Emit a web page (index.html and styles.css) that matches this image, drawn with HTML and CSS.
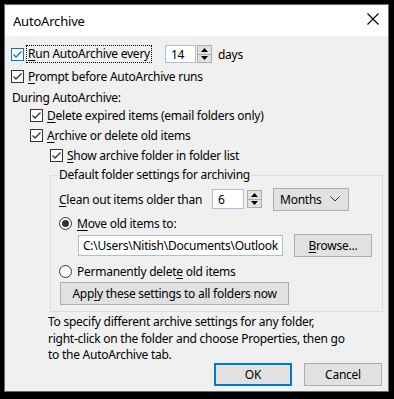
FILE: index.html
```html
<!DOCTYPE html>
<html>
<head>
<meta charset="utf-8">
<title>AutoArchive</title>
<link rel="stylesheet" href="styles.css">
</head>
<body>
<div class="dialog">
  <div class="titlebar">
    <span class="title">AutoArchive</span>
    <svg class="close" width="12" height="12" viewBox="0 0 12 12"><path d="M0.5 0.5L11.5 11.5M11.5 0.5L0.5 11.5" stroke="#000" stroke-width="1.1" fill="none"/></svg>
  </div>
  <div class="content">
    <div class="row r-run">
      <span class="chk focus"><svg width="11" height="11" viewBox="0 0 11 11"><path d="M1.5 5.5L4 8L9.5 2.5" stroke="#0078d7" stroke-width="1.3" fill="none"/></svg></span>
      <span class="lbl focusring"><u>R</u>un AutoArchive every</span>
      <span class="spin s-days">
        <span class="field f-days">14</span>
        <span class="spinbtns">
          <span class="sb"><svg width="7" height="4" viewBox="0 0 7 4"><path d="M0 4L3.5 0L7 4Z" fill="#000"/></svg></span>
          <span class="sb"><svg width="7" height="4" viewBox="0 0 7 4"><path d="M0 0L3.5 4L7 0Z" fill="#000"/></svg></span>
        </span>
      </span>
      <span class="days">days</span>
    </div>
    <div class="row r-prompt">
      <span class="chk"><svg width="11" height="11" viewBox="0 0 11 11"><path d="M1.5 5.5L4 8L9.5 2.5" stroke="#333" stroke-width="1.3" fill="none"/></svg></span>
      <span class="lbl"><u>P</u>rompt before AutoArchive runs</span>
    </div>
    <div class="row r-during">
      <span class="lbl">During AutoArchive:</span>
    </div>
    <div class="row r-delete ind1">
      <span class="chk"><svg width="11" height="11" viewBox="0 0 11 11"><path d="M1.5 5.5L4 8L9.5 2.5" stroke="#333" stroke-width="1.3" fill="none"/></svg></span>
      <span class="lbl"><u>D</u>elete expired items (email folders only)</span>
    </div>
    <div class="row r-archive ind1">
      <span class="chk"><svg width="11" height="11" viewBox="0 0 11 11"><path d="M1.5 5.5L4 8L9.5 2.5" stroke="#333" stroke-width="1.3" fill="none"/></svg></span>
      <span class="lbl"><u>A</u>rchive or delete old items</span>
    </div>
    <div class="row r-show ind2">
      <span class="chk"><svg width="11" height="11" viewBox="0 0 11 11"><path d="M1.5 5.5L4 8L9.5 2.5" stroke="#333" stroke-width="1.3" fill="none"/></svg></span>
      <span class="lbl"><u>S</u>how archive folder in folder list</span>
    </div>
    <fieldset class="group">
      <legend class="legend">Default folder settings for archiving</legend>
      <div class="row r-clean">
        <span class="lbl clean-lbl"><u>C</u>lean out items older than</span>
        <span class="spin s-age">
          <span class="field f-age">6</span>
          <span class="spinbtns">
            <span class="sb"><svg width="7" height="4" viewBox="0 0 7 4"><path d="M0 4L3.5 0L7 4Z" fill="#000"/></svg></span>
            <span class="sb"><svg width="7" height="4" viewBox="0 0 7 4"><path d="M0 0L3.5 4L7 0Z" fill="#000"/></svg></span>
          </span>
        </span>
        <span class="select">
          <span>Months</span>
          <svg width="10" height="6" viewBox="0 0 10 6"><path d="M0.5 0.5L5 5L9.5 0.5" stroke="#333" stroke-width="1" fill="none"/></svg>
        </span>
      </div>
      <div class="row r-move">
        <span class="radio on"><span class="dot"></span></span>
        <span class="lbl"><u>M</u>ove old items to:</span>
      </div>
      <div class="row r-path">
        <span class="field f-path">C:\Users\Nitish\Documents\Outlook</span>
        <span class="btn b-browse"><u>B</u>rowse...</span>
      </div>
      <div class="row r-perm">
        <span class="radio"></span>
        <span class="lbl">Permanently delet<u>e</u> old items</span>
      </div>
      <div class="row r-apply">
        <span class="btn b-apply">App<u>l</u>y these settings to all folders now</span>
      </div>
    </fieldset>
    <p class="note">To specify different archive settings for any folder,<br>right-click on the folder and choose Properties, then go<br>to the AutoArchive tab.</p>
    <div class="actions">
      <span class="btn b-ok">OK</span>
      <span class="btn b-cancel">Cancel</span>
    </div>
  </div>
</div>
</body>
</html>
```
FILE: styles.css
```css
* { box-sizing: border-box; }
html, body { margin: 0; }
body {
  background: #000;
  width: 394px;
  height: 399px;
  padding: 4px 5px 7px 4px;
  font-family: "Noto Sans", "Open Sans", sans-serif;
  font-size: 12px;
  letter-spacing: -0.25px;
  color: #000;
  overflow: hidden;
}
u { text-decoration: underline; text-underline-offset: 2px; text-decoration-thickness: 1px; }
.dialog {
  width: 385px;
  height: 388px;
  border: 1px solid #6b6b6b;
  background: #f0f0f0;
  display: flex;
  flex-direction: column;
}
.titlebar {
  height: 31px;
  flex: none;
  background: #fff;
  display: flex;
  align-items: center;
  justify-content: space-between;
  padding: 0 9px 0 8px;
}
.title { font-size: 13px; letter-spacing: -0.2px; }
.close { margin-top: -3px; }
.content {
  padding: 8px 6px 0 6px;
  display: flex;
  flex-direction: column;
}
.row { display: flex; align-items: center; height: 20px; flex: none; white-space: nowrap; }
.chk {
  width: 13px; height: 13px;
  border: 1px solid #333;
  background: #fff;
  display: flex; align-items: center; justify-content: center;
  margin-right: 4px;
  flex: none;
}
.chk.focus { border-color: #0078d7; }
.focusring { outline: 1px dotted #000; outline-offset: 0; padding: 0 1px; margin-left: -1px; line-height: 16px; }
.r-prompt { margin-top: 2px; }
.r-during { height: 16px; margin-top: 3px; padding-left: 1px; }
.r-delete { margin-top: 0; }
.ind1 { padding-left: 19px; }
.ind2 { padding-left: 39px; }
.spin { display: flex; align-items: center; gap: 1px; }
.s-days { margin-left: 14px; }
.field {
  background: #fff;
  border: 1px solid #a7c0dc;
  height: 18px;
  display: flex; align-items: center;
  padding-left: 5px;
}
.f-days { width: 31px; }
.spinbtns { display: flex; flex-direction: column; width: 15px; height: 18px; }
.sb {
  flex: 1;
  background: #e1e1e1;
  border: 1px solid #adadad;
  display: flex; align-items: center; justify-content: center;
}
.sb + .sb { border-top: none; }
.days { margin-left: 6px; }
.group {
  margin: 2px 0 0 39px;
  width: 333px;
  border: 1px solid #dcdcdc;
  padding: 0 8px 6px 8px;
  min-width: 0;
}
.legend { padding: 0 1px; margin-left: -1px; line-height: 16px; }
.r-clean { height: 24px; margin-top: 4px; }
.clean-lbl { width: 153px; }
.f-age { width: 32px; height: 20px; }
.s-age .spinbtns { height: 18px; margin-left: 2px; }
.select {
  margin-left: 11px;
  width: 76px; height: 23px;
  background: #e1e1e1;
  border: 1px solid #adadad;
  display: flex; align-items: center; justify-content: space-between;
  padding: 0 8px 0 6px;
}
.radio {
  width: 13px; height: 13px; border-radius: 50%;
  border: 1px solid #333; background: #fff;
  display: flex; align-items: center; justify-content: center;
  margin-right: 5px; flex: none;
}
.dot { width: 7px; height: 7px; border-radius: 50%; background: #333; }
.r-move { margin-top: 2px; }
.r-path { height: 23px; margin-top: 1px; padding-left: 19px; }
.f-path { width: 205px; height: 21px; padding-left: 4px; }
.btn {
  background: #e1e1e1;
  border: 1px solid #adadad;
  display: flex; align-items: center; justify-content: center;
  height: 23px;
}
.b-browse { width: 78px; margin-left: 11px; }
.r-perm { margin-top: 4px; }
.r-apply { height: 23px; margin-top: 1px; padding-left: 1px; }
.b-apply { width: 229px; }
.note { margin: 2px 0 0 37px; line-height: 16.5px; }
.actions { display: flex; justify-content: flex-end; gap: 12px; margin-top: -1px; }
.b-ok { width: 78px; border: 2px solid #0078d7; }
.b-cancel { width: 78px; }
```
